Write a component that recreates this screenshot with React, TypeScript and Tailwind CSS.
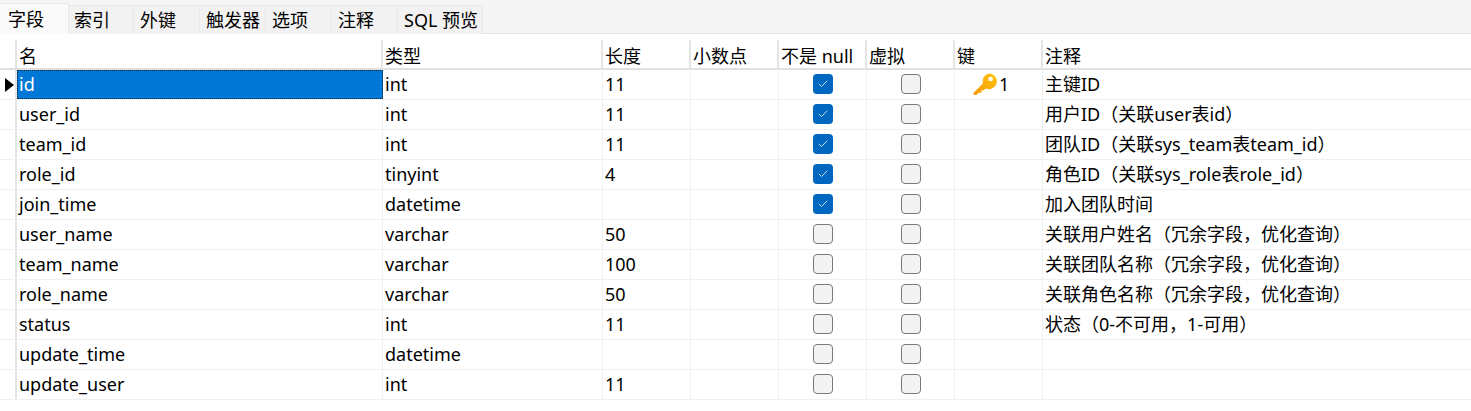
import { Check } from "lucide-react";

const tabs = [
  { label: "索引", w: "w-[65px] pl-[5px]" },
  { label: "外键", w: "w-[66px] pl-[6px]" },
  { label: "触发器", w: "w-[66px] pl-[6px]" },
  { label: "选项", w: "w-[66px] pl-[6px]" },
  { label: "注释", w: "w-[66px] pl-[6px]" },
  { label: "SQL 预览", w: "w-[85px] pl-[6px]" },
];

type Field = {
  name: string;
  type: string;
  len: string;
  notNull: boolean;
  pk?: boolean;
  comment: string;
};

const fields: Field[] = [
  { name: "id", type: "int", len: "11", notNull: true, pk: true, comment: "主键ID" },
  { name: "user_id", type: "int", len: "11", notNull: true, comment: "用户ID（关联user表id）" },
  { name: "team_id", type: "int", len: "11", notNull: true, comment: "团队ID（关联sys_team表team_id）" },
  { name: "role_id", type: "tinyint", len: "4", notNull: true, comment: "角色ID（关联sys_role表role_id）" },
  { name: "join_time", type: "datetime", len: "", notNull: true, comment: "加入团队时间" },
  { name: "user_name", type: "varchar", len: "50", notNull: false, comment: "关联用户姓名（冗余字段，优化查询）" },
  { name: "team_name", type: "varchar", len: "100", notNull: false, comment: "关联团队名称（冗余字段，优化查询）" },
  { name: "role_name", type: "varchar", len: "50", notNull: false, comment: "关联角色名称（冗余字段，优化查询）" },
  { name: "status", type: "int", len: "11", notNull: false, comment: "状态（0-不可用，1-可用）" },
  { name: "update_time", type: "datetime", len: "", notNull: false, comment: "" },
  { name: "update_user", type: "int", len: "11", notNull: false, comment: "" },
];

const cols = "grid grid-cols-[17px_366px_220px_88px_88px_88px_88px_88px_1fr]";
const cell = "border-r border-[#f0f0f0] pl-[2px] pb-[1px] flex items-center whitespace-nowrap overflow-hidden";
const boxCell = "border-r border-[#f0f0f0] pl-[1px] pb-[1px] flex items-center justify-center";
const head = "border-r-2 border-[#e4e4e4] pl-[2px] pt-[3px] flex items-center whitespace-nowrap overflow-hidden";

const CheckBox = ({ on }: { on: boolean }) =>
  on ? (
    <span className="w-5 h-5 rounded-[4px] bg-[#0067c0] flex items-center justify-center">
      <Check size={12} strokeWidth={1.5} className="text-white" />
    </span>
  ) : (
    <span className="w-5 h-5 rounded-[4px] bg-[#f3f3f3] border border-[#7a7a7a]" />
  );

const KeyIcon = () => (
  <svg width="26" height="24" viewBox="0 0 26 24">
    <defs>
      <linearGradient id="keyGrad" x1="0" y1="1" x2="1" y2="0">
        <stop offset="0" stopColor="#f49a0e" />
        <stop offset="1" stopColor="#ffc30b" />
      </linearGradient>
    </defs>
    <path
      fill="url(#keyGrad)"
      fillRule="evenodd"
      d="M17 1.5a7.8 7.8 0 1 1-3.2 14.9L12 18.2H9.5v2.6H6.6L4.4 23H2.2L1 21.6 11 11.2A7.8 7.8 0 0 1 17 1.5Zm1.6 3.2a2.3 2.3 0 1 0 0 4.6 2.3 2.3 0 0 0 0-4.6Z"
    />
  </svg>
);

export default function App() {
  return (
    <div className="w-[1471px] h-[411px] bg-white overflow-hidden text-[18px] text-black font-['Noto_Sans','Noto_Sans_CJK_SC',sans-serif]">
      <div className="h-[34px] pt-[3px] bg-[#f5f5f5] border-b border-[#e5e5e5] flex">
        <div className="w-[69px] h-[31px] bg-[#fafafa] border-r border-t border-[#e8e8e8] pl-2 flex items-center">字段</div>
        {tabs.map((t) => (
          <div key={t.label} className={`${t.w} mt-[2px] h-[29px] bg-[#f2f2f2] border-r border-t border-[#e8e8e8] flex items-center whitespace-nowrap`}>
            {t.label}
          </div>
        ))}
      </div>

      <div className="pt-[6px]">
        <div className={`${cols} h-[30px] border-b-2 border-[#e0e0e0]`}>
          <div className="border-r-2 border-[#e4e4e4]" />
          <div className={head}>名</div>
          <div className={head}>类型</div>
          <div className={head}>长度</div>
          <div className={head}>小数点</div>
          <div className={head}>不是 null</div>
          <div className={head}>虚拟</div>
          <div className={head}>键</div>
          <div className="pl-[2px] pt-[3px] flex items-center">注释</div>
        </div>

        {fields.map((f, i) => (
          <div key={f.name} className={`${cols} h-[30px] border-b border-[#f0f0f0]`}>
            <div className="border-r-2 border-[#e4e4e4] flex items-center pl-[5px]">
              {i === 0 && <span className="w-0 h-0 border-y-[7px] border-y-transparent border-l-[9px] border-l-black" />}
            </div>
            {i === 0 ? (
              <div className="bg-[#0078d7] text-white outline-dotted outline-1 -outline-offset-1 outline-[#222] pl-[2px] pb-[1px] flex items-center">{f.name}</div>
            ) : (
              <div className={cell}>{f.name}</div>
            )}
            <div className={cell}>{f.type}</div>
            <div className={cell}>{f.len}</div>
            <div className={cell} />
            <div className={boxCell}>
              <CheckBox on={f.notNull} />
            </div>
            <div className={boxCell}>
              <CheckBox on={false} />
            </div>
            <div className={`${cell} pl-[17px] gap-[1px]`}>
              {f.pk && (
                <>
                  <KeyIcon />
                  <span>1</span>
                </>
              )}
            </div>
            <div className="pl-[2px] pb-[1px] flex items-center whitespace-nowrap">{f.comment}</div>
          </div>
        ))}
      </div>
    </div>
  );
}
